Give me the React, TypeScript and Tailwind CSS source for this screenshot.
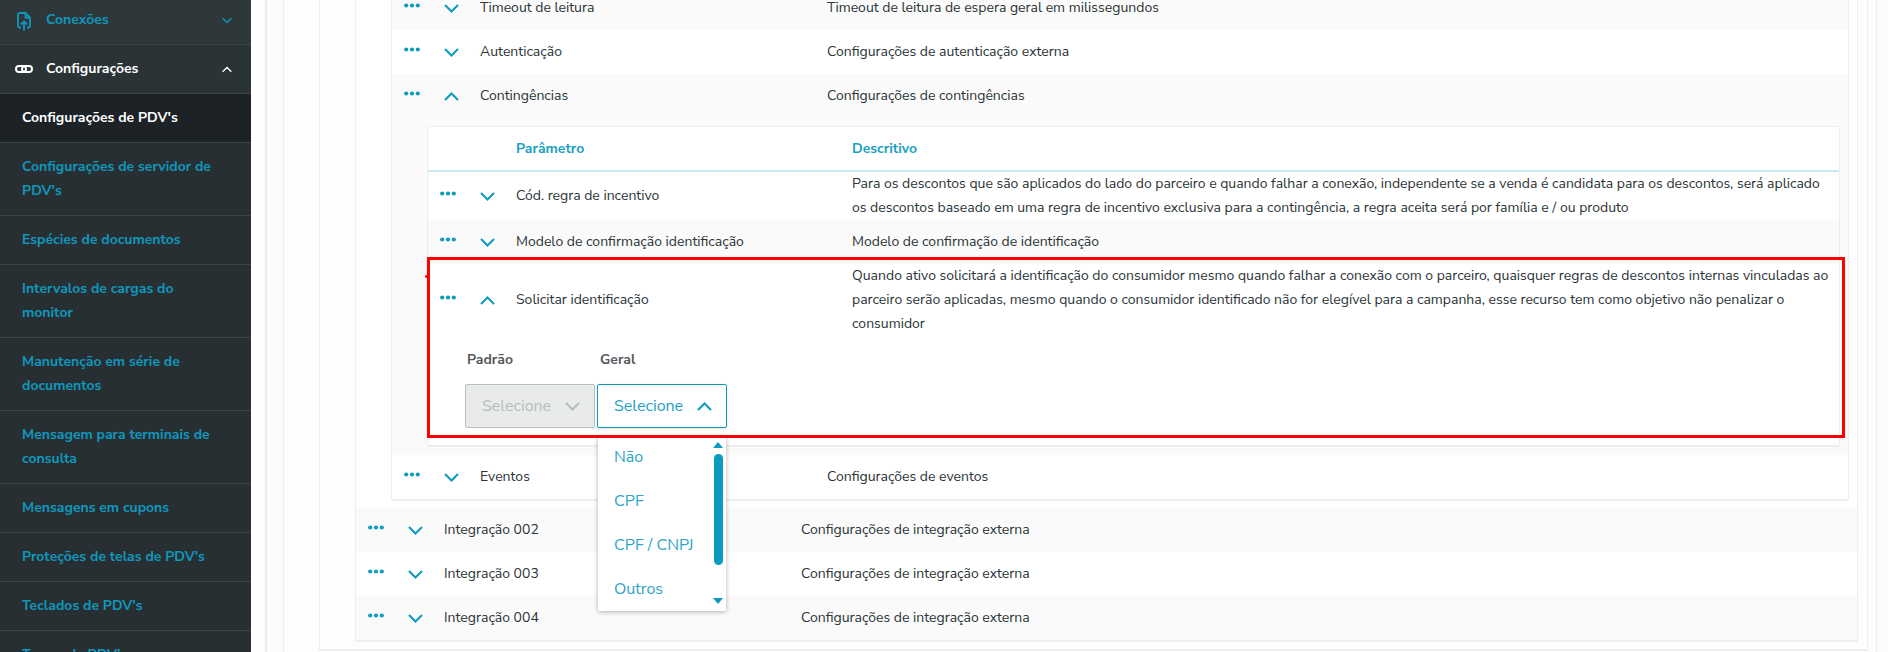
const blue = "#0c9abe";

function Dots() {
  return (
    <svg width="16" height="5" viewBox="0 0 16 5" className="mb-[6px] shrink-0" fill={blue}>
      <circle cx="2.2" cy="2.5" r="2.1" />
      <circle cx="8" cy="2.5" r="2.1" />
      <circle cx="13.8" cy="2.5" r="2.1" />
    </svg>
  );
}

function Chevron({ up = false, color = blue, width = 15 }: { up?: boolean; color?: string; width?: number }) {
  return (
    <svg width={width} height="9" viewBox="0 0 15 9" fill="none" stroke={color} strokeWidth="2" className="shrink-0">
      <polyline points={up ? "1,8 7.5,1.5 14,8" : "1,1 7.5,7.5 14,1"} />
    </svg>
  );
}

function Row({
  label,
  desc,
  descAt,
  up = false,
  striped = false,
  tall = "h-[44px]",
}: {
  label: string;
  desc: React.ReactNode;
  descAt: string;
  up?: boolean;
  striped?: boolean;
  tall?: string;
}) {
  return (
    <div className={`flex items-center ${tall} ${striped ? "bg-[#fafafa]" : ""}`}>
      <div className="flex w-[88px] shrink-0 items-center pl-[12px]">
        <Dots />
        <div className="ml-[24px]">
          <Chevron up={up} />
        </div>
      </div>
      <div className={`${descAt} shrink-0`}>{label}</div>
      <div className="flex-1 pr-[8px]">{desc}</div>
    </div>
  );
}

const menu = [
  { t: "Configurações de PDV's", active: true },
  { t: "Configurações de servidor de PDV's" },
  { t: "Espécies de documentos" },
  { t: "Intervalos de cargas do monitor" },
  { t: "Manutenção em série de documentos" },
  { t: "Mensagem para terminais de consulta" },
  { t: "Mensagens em cupons" },
  { t: "Proteções de telas de PDV's" },
  { t: "Teclados de PDV's" },
  { t: "Temas de PDV's" },
];

function Sidebar() {
  return (
    <aside className="h-[652px] w-[251px] shrink-0 overflow-hidden bg-[#272f33] text-[14px] font-bold leading-[24px]">
      <div className="flex h-[45px] items-center border-b border-[#3a4448] bg-[#2e383b] pl-[17px] pr-[19px] pb-[4px] text-[#0f97bc]">
        <svg width="14" height="19" viewBox="0 0 14 19" fill="none" stroke="#0f97bc" strokeWidth="1.8" className="mt-[2px] shrink-0">
          <path d="M4 15.5H2.5A1.5 1.5 0 0 1 1 14V2.5A1.5 1.5 0 0 1 2.5 1H8.5L13 5.5V14A1.5 1.5 0 0 1 11.5 15.5H10" />
          <path d="M8.5 1V5.5H13" />
          <path d="M7 18.5V9.5M4 12.5L7 9.5L10 12.5" />
        </svg>
        <span className="ml-[15px] flex-1">Conexões</span>
        <Chevron color="#0f97bc" width={10} />
      </div>
      <div className="flex h-[49px] items-center border-b border-[#3a4448] bg-[#2a3336] pl-[15px] pr-[19px] text-white">
        <svg width="18" height="8" viewBox="0 0 18 8" fill="none" stroke="#fff" strokeWidth="2" className="shrink-0">
          <rect x="1" y="1" width="10" height="6" rx="3" />
          <rect x="7" y="1" width="10" height="6" rx="3" />
        </svg>
        <span className="ml-[13px] flex-1">Configurações</span>
        <Chevron up color="#fff" width={10} />
      </div>
      {menu.map((m) => (
        <div
          key={m.t}
          className={`border-b border-[#3a4448] pl-[22px] pr-[32px] py-[12px] ${m.active ? "bg-[#1c2225] text-white" : "text-[#0f97bc]"}`}
        >
          {m.t}
        </div>
      ))}
    </aside>
  );
}

function Select({ disabled = false }: { disabled?: boolean }) {
  return (
    <div
      className={`flex h-[44px] w-[130px] items-center justify-between rounded-[2px] border pl-[16px] pr-[14px] text-[16px] ${
        disabled
          ? "border-[#b9bdbd] bg-[#e9ebeb] text-[#b7bbbb]"
          : "border-[#0c9abe] bg-white text-[#1a9fc4] shadow-[0_1px_3px_rgba(0,0,0,0.12)]"
      }`}
    >
      <span>Selecione</span>
      <Chevron up={!disabled} color={disabled ? "#b7bbbb" : blue} />
    </div>
  );
}

function Dropdown() {
  return (
    <div className="absolute left-[598px] top-[436px] h-[175px] w-[128px] rounded-[2px] bg-white text-[16px] text-[#2ba5c8] shadow-[0_1px_5px_rgba(0,0,0,0.3)]">
      <div className="-mt-[1px] flex flex-col pl-[16px]">
        {["Não", "CPF", "CPF / CNPJ", "Outros"].map((o) => (
          <div key={o} className="flex h-[44px] items-center">
            {o}
          </div>
        ))}
      </div>
      <svg width="10" height="6" viewBox="0 0 10 6" className="absolute left-[115px] top-[6px]" fill={blue}>
        <polygon points="5,0 10,6 0,6" />
      </svg>
      <div className="absolute left-[116px] top-[18px] h-[111px] w-[9px] rounded-[5px] bg-[#0c9abe]" />
      <svg width="10" height="6" viewBox="0 0 10 6" className="absolute left-[115px] top-[162px]" fill={blue}>
        <polygon points="0,0 10,0 5,6" />
      </svg>
    </div>
  );
}

function InnerTable() {
  return (
    <div className="mr-[8px] ml-[35px] rounded-[2px] border border-b-2 border-[#eeeeee] bg-white">
      <div className="flex h-[43px] items-center font-bold text-[#1a9fc4]">
        <div className="w-[88px] shrink-0" />
        <div className="w-[336px] shrink-0">Parâmetro</div>
        <div>Descritivo</div>
      </div>
      <div className="h-[2px] bg-[#cde7f0]" />
      <Row
        label="Cód. regra de incentivo"
        descAt="w-[336px]"
        tall="h-[48px]"
        desc={
          <>
            Para os descontos que são aplicados do lado do parceiro e quando falhar a conexão, independente se a venda é
            candidata para os descontos, será aplicado os descontos baseado em uma regra de incentivo exclusiva para a
            contingência, a regra aceita será por família e / ou produto
          </>
        }
      />
      <Row label="Modelo de confirmação identificação" descAt="w-[336px]" striped desc="Modelo de confirmação de identificação" />
      <Row
        label="Solicitar identificação"
        descAt="w-[336px]"
        up
        tall="h-[72px]"
        desc={
          <>
            Quando ativo solicitará a identificação do consumidor mesmo quando falhar a conexão com o parceiro, quaisquer
            regras de descontos internas vinculadas ao parceiro serão aplicadas, mesmo quando o consumidor identificado não
            for elegível para a campanha, esse recurso tem como objetivo não penalizar o consumidor
          </>
        }
      />
      <div className="flex gap-[2px] pl-[37px] pt-[12px] pb-[17px]">
        <div>
          <div className="h-[36px] pl-[2px] font-bold text-[#58595b]">Padrão</div>
          <Select disabled />
        </div>
        <div>
          <div className="h-[36px] pl-[3px] font-bold text-[#58595b]">Geral</div>
          <Select />
        </div>
      </div>
    </div>
  );
}

export default function App() {
  return (
    <div
      className="relative flex h-[652px] w-[1888px] overflow-hidden bg-white text-[14px] leading-[24px] text-[#2b3437]"
      style={{ fontFamily: '"Nunito Sans", Nunito, Lato, "Open Sans", sans-serif' }}
    >
      <Sidebar />
      <main className="h-[652px] flex-1 overflow-hidden pl-[15px]">
        <div className="-mt-[14px] border-l border-[#e4e4e4] bg-[#fcfcfc] pl-[16px] pr-[11px] shadow-[-1px_0_2px_rgba(0,0,0,0.08)]">
          <div className="border-x border-[#eeeeee] bg-[#fdfdfd] pl-[35px] pr-[8px] pb-[20px]">
            <div className="border-x border-b-2 border-[#eeeeee] bg-[#fdfdfd] pl-[35px] pr-[9px] pb-[7px]">
              <div className="rounded-[2px] border-x border-b-2 border-[#eeeeee] bg-white">
                <div className="pb-[7px] pl-[35px] pr-[8px]">
                  <div className="rounded-[2px] border-x border-b-2 border-[#eeeeee] bg-white">
                    <Row label="Timeout de leitura" descAt="w-[347px]" striped desc="Timeout de leitura de espera geral em milissegundos" />
                    <Row label="Autenticação" descAt="w-[347px]" desc="Configurações de autenticação externa" />
                    <div className="bg-[#fafafa] pb-[8px]">
                      <Row label="Contingências" descAt="w-[347px]" up desc="Configurações de contingências" />
                      <div className="pt-[8px]">
                        <InnerTable />
                      </div>
                    </div>
                    <Row label="Eventos" descAt="w-[347px]" desc="Configurações de eventos" />
                  </div>
                </div>
                <Row label="Integração 002" descAt="w-[357px]" striped desc="Configurações de integração externa" />
                <Row label="Integração 003" descAt="w-[357px]" desc="Configurações de integração externa" />
                <Row label="Integração 004" descAt="w-[357px]" striped desc="Configurações de integração externa" />
              </div>
            </div>
          </div>
        </div>
      </main>
      <Dropdown />
      <div className="absolute left-[427px] top-[257px] h-[181px] w-[1418px] border-[3px] border-[#ff0000]" />
      <div className="absolute left-[425px] top-[275px] h-[3px] w-[3px] rounded-full bg-[#ff0000]" />
    </div>
  );
}
